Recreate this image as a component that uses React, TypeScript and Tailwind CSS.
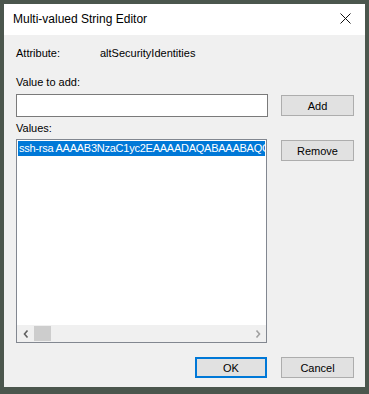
import React from "react";

export default function App() {
  const font = { fontFamily: '"Liberation Sans", "Noto Sans", Arial, sans-serif' };
  return (
    <div className="w-[369px] h-[394px] bg-[#4b564d] pt-[4px] pl-[4px] pr-[4px] pb-[7px] flex" style={font}>
      <div className="flex-1 flex flex-col bg-[#f0f0f0] text-[11px] text-black leading-[16px]">
        <div className="h-[31px] bg-white flex items-center justify-between pl-[9px] pr-[14px]">
          <span className="text-[12px] mt-[-1px]">Multi-valued String Editor</span>
          <svg width="11" height="11" viewBox="0 0 11 11" className="mt-[-2px]">
            <path d="M0.5 0.5 L10.5 10.5 M10.5 0.5 L0.5 10.5" stroke="#111" strokeWidth="1" />
          </svg>
        </div>
        <div className="flex-1 flex flex-col pl-[12px] pr-[11px]">
          <div className="flex mt-[10px] h-[16px]">
            <span className="w-[84px]">Attribute:</span>
            <span>altSecurityIdentities</span>
          </div>
          <div className="mt-[13px] h-[16px]">Value to add:</div>
          <div className="flex items-center justify-between mt-[4px]">
            <div className="w-[252px] h-[23px] bg-white border border-[#7a7a7a]" />
            <button className="w-[73px] h-[21px] bg-[#e1e1e1] border border-[#adadad] text-[11px]">Add</button>
          </div>
          <div className="mt-[3px] h-[16px]">Values:</div>
          <div className="flex justify-between items-start mt-[3px]">
            <div className="w-[251px] h-[204px] bg-white border border-[#828790] flex flex-col">
              <div className="flex-1 p-[1px] overflow-hidden">
                <div className="h-[15px] bg-[#0078d7] text-white whitespace-nowrap overflow-hidden leading-[15px] pl-[1px] tracking-[-0.25px]">
                  ssh-rsa AAAAB3NzaC1yc2EAAAADAQABAAABAQC
                </div>
              </div>
              <div className="h-[17px] bg-[#f0f0f0] flex items-center">
                <div className="w-[17px] h-[17px] flex items-center justify-center">
                  <svg width="6" height="8" viewBox="0 0 6 8">
                    <path d="M4.5 0.5 L1.5 4 L4.5 7.5" stroke="#606060" strokeWidth="1.6" fill="none" />
                  </svg>
                </div>
                <div className="w-[17px] h-[15px] bg-[#cdcdcd]" />
                <div className="flex-1" />
                <div className="w-[17px] h-[17px] flex items-center justify-center">
                  <svg width="6" height="8" viewBox="0 0 6 8">
                    <path d="M1.5 0.5 L4.5 4 L1.5 7.5" stroke="#a0a0a0" strokeWidth="1.6" fill="none" />
                  </svg>
                </div>
              </div>
            </div>
            <button className="w-[73px] h-[21px] mt-[1px] bg-[#e1e1e1] border border-[#adadad] text-[11px]">Remove</button>
          </div>
          <div className="flex justify-end gap-[14px] mt-[14px]">
            <button className="w-[72px] h-[21px] bg-[#e1e1e1] border-2 border-[#0078d7] text-[11px]">OK</button>
            <button className="w-[73px] h-[21px] bg-[#e1e1e1] border border-[#adadad] text-[11px]">Cancel</button>
          </div>
        </div>
      </div>
    </div>
  );
}
